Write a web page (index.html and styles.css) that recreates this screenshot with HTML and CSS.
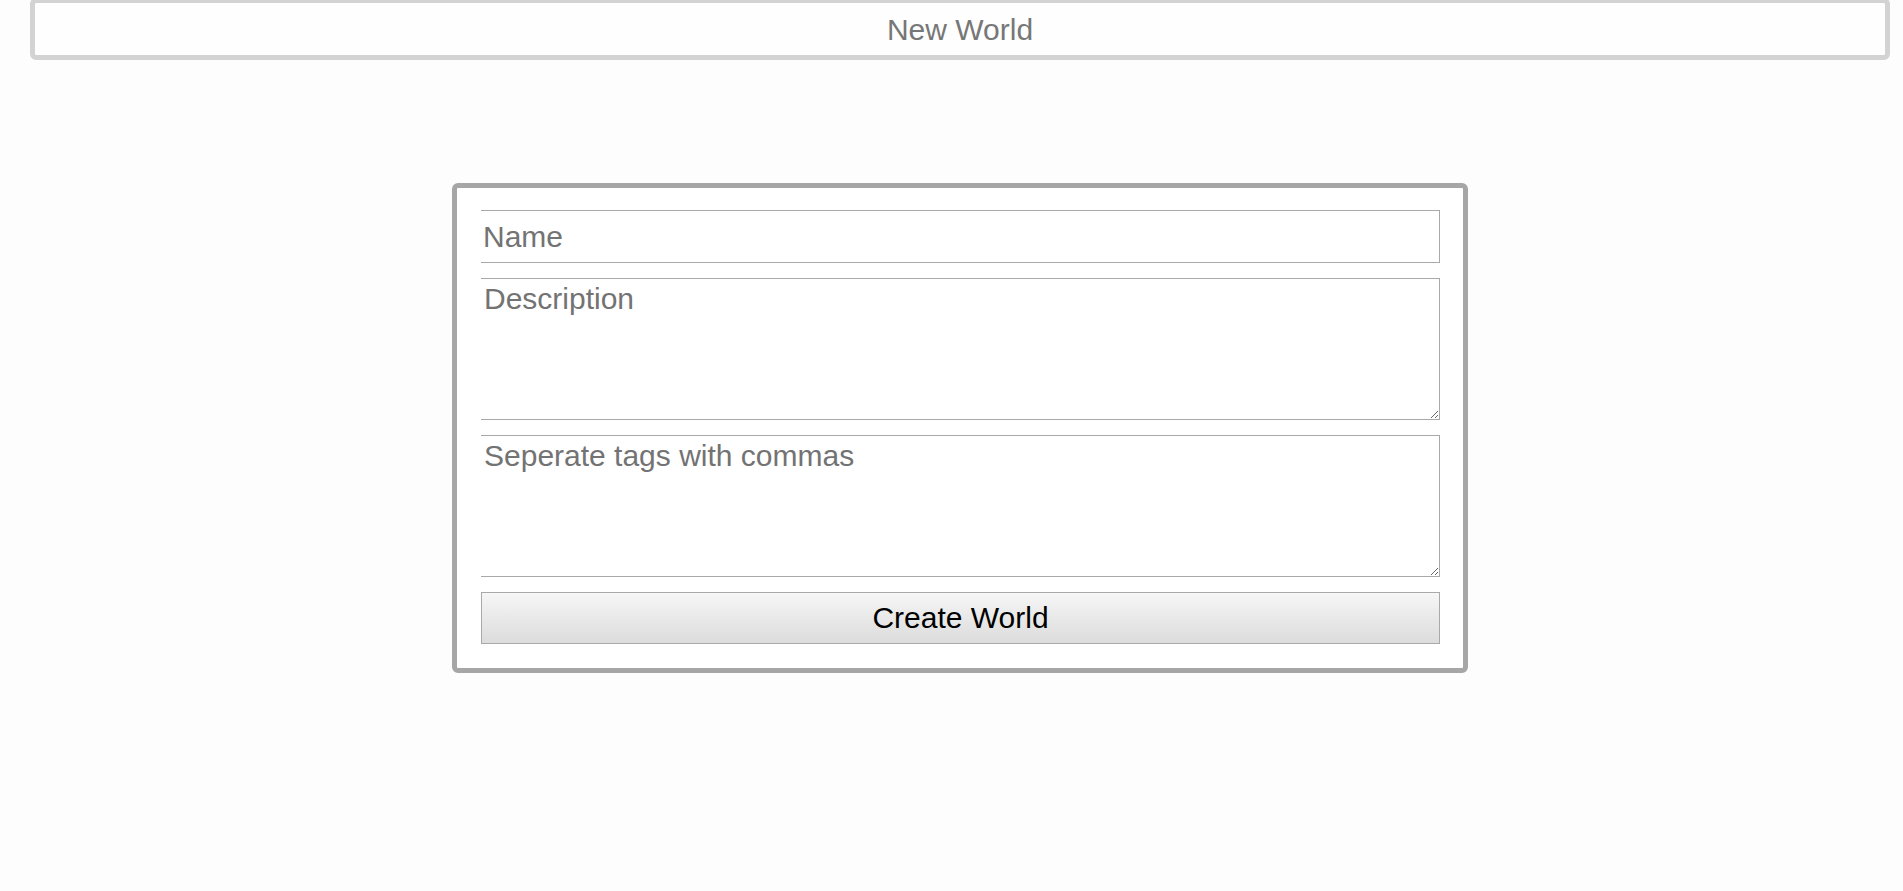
FILE: index.html
```html
<!DOCTYPE html>
<html lang="en">
<head>
<meta charset="utf-8">
<title>New World</title>
<link rel="stylesheet" href="styles.css">
</head>
<body>
  <div class="page">
    <header class="title-bar">New World</header>
    <form class="world-form">
      <input class="field field-name" type="text" placeholder="Name">
      <textarea class="field field-area" placeholder="Description"></textarea>
      <textarea class="field field-area" placeholder="Seperate tags with commas"></textarea>
      <button class="submit" type="button">Create World</button>
    </form>
  </div>
</body>
</html>
```

FILE: styles.css
```css
html, body {
  margin: 0;
  padding: 0;
  background: #fdfdfd;
  font-family: "Liberation Sans", Arial, sans-serif;
}

.page {
  margin: -2px 13px 0 30px;
}

.title-bar {
  height: 52px;
  line-height: 53px;
  border: 5px solid #d3d3d3;
  border-radius: 6px;
  background: #fefefe;
  text-align: center;
  font-size: 30px;
  color: #777777;
}

.world-form {
  box-sizing: border-box;
  width: 1016px;
  margin: 123px auto 0;
  padding: 22px 23px 24px 24px;
  border: 5px solid #a6a6a6;
  border-radius: 6px;
  background: #ffffff;
  display: flex;
  flex-direction: column;
  gap: 15px;
}

.field {
  box-sizing: border-box;
  width: 100%;
  margin: 0;
  font-family: "Liberation Sans", Arial, sans-serif;
  font-size: 30px;
  color: #000;
  background: #fff;
  border: 1px solid #a9a9a9;
  border-left: none;
  border-radius: 0;
  outline: none;
}

.field::placeholder {
  color: #737373;
}

.field-name {
  height: 53px;
  padding: 1px 2px;
}

.field-area {
  height: 142px;
  padding: 3px 2px 2px 3px;
  resize: vertical;
  display: block;
}

.submit {
  box-sizing: border-box;
  width: 100%;
  height: 52px;
  margin: 0;
  padding: 0;
  font-family: "Liberation Sans", Arial, sans-serif;
  font-size: 30px;
  color: #000;
  border: 1px solid #a9a9a9;
  border-radius: 0;
  background: linear-gradient(to bottom, #f6f6f6, #dcdcdc);
}
```
